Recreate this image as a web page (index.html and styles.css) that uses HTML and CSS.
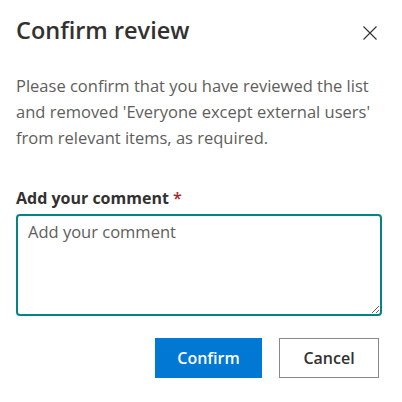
FILE: index.html
```html
<!DOCTYPE html>
<html lang="en">
<head>
  <meta charset="UTF-8">
  <meta name="viewport" content="width=device-width, initial-scale=1.0">
  <title>Confirm review</title>
  <link rel="stylesheet" href="styles.css">
</head>
<body>
  <div class="dialog">
    <div class="dialog-header">
      <h1 class="dialog-title">Confirm review</h1>
      <button class="close-button" aria-label="Close">
        <svg width="14" height="14" viewBox="0 0 14 14">
          <path d="M0.5 0.5 L13.5 13.5 M13.5 0.5 L0.5 13.5" stroke="#323130" stroke-width="1.1" fill="none" />
        </svg>
      </button>
    </div>

    <p class="dialog-text">Please confirm that you have reviewed the list and removed 'Everyone except external users' from relevant items, as required.</p>

    <label class="field-label" for="comment">Add your comment <span class="required">*</span></label>
    <textarea id="comment" class="comment-box" placeholder="Add your comment"></textarea>

    <div class="dialog-actions">
      <button class="btn btn-primary">Confirm</button>
      <button class="btn btn-default">Cancel</button>
    </div>
  </div>
</body>
</html>
```

FILE: styles.css
```css
:root {
  --text-main: #323130;
  --text-muted: #605e5c;
  --accent: #0078d4;
  --teal: #038387;
  --border: #8a8886;
  --danger: #a4262c;
}

* {
  box-sizing: border-box;
  margin: 0;
  padding: 0;
}

body {
  font-family: 'Open Sans', 'Noto Sans', sans-serif;
  background-color: #ffffff;
  color: var(--text-main);
}

.dialog {
  width: 402px;
  padding: 14px 20px 0 16px;
}

.dialog-header {
  display: flex;
  justify-content: space-between;
  align-items: flex-start;
}

.dialog-title {
  font-size: 23.5px;
  font-weight: 600;
  line-height: 32px;
  color: var(--text-main);
}

.close-button {
  background: none;
  border: none;
  width: 14px;
  height: 14px;
  margin-top: 12px;
  margin-right: 5px;
  cursor: pointer;
}

.close-button svg {
  display: block;
}

.dialog-text {
  margin-top: 27px;
  font-size: 16.5px;
  line-height: 26px;
  color: var(--text-muted);
}

.field-label {
  display: block;
  margin-top: 36px;
  font-size: 16px;
  font-weight: 700;
  line-height: 22px;
  color: var(--text-main);
}

.required {
  color: var(--danger);
  font-weight: 600;
}

.comment-box {
  display: block;
  width: 100%;
  height: 102px;
  margin-top: 5px;
  padding: 4px 10px;
  border: 2px solid var(--teal);
  border-radius: 4px;
  font-family: inherit;
  font-size: 16.5px;
  line-height: 24px;
  color: var(--text-main);
  outline: none;
}

.comment-box::placeholder {
  color: var(--text-muted);
}

.dialog-actions {
  display: flex;
  justify-content: flex-end;
  gap: 17px;
  margin-top: 22px;
  margin-right: 3px;
}

.btn {
  height: 40px;
  font-family: inherit;
  font-size: 16px;
  font-weight: 600;
  cursor: pointer;
}

.btn-primary {
  width: 107px;
  background-color: var(--accent);
  border: 1px solid var(--accent);
  color: #ffffff;
}

.btn-default {
  width: 100px;
  background-color: #ffffff;
  border: 1px solid var(--border);
  color: var(--text-main);
}
```
